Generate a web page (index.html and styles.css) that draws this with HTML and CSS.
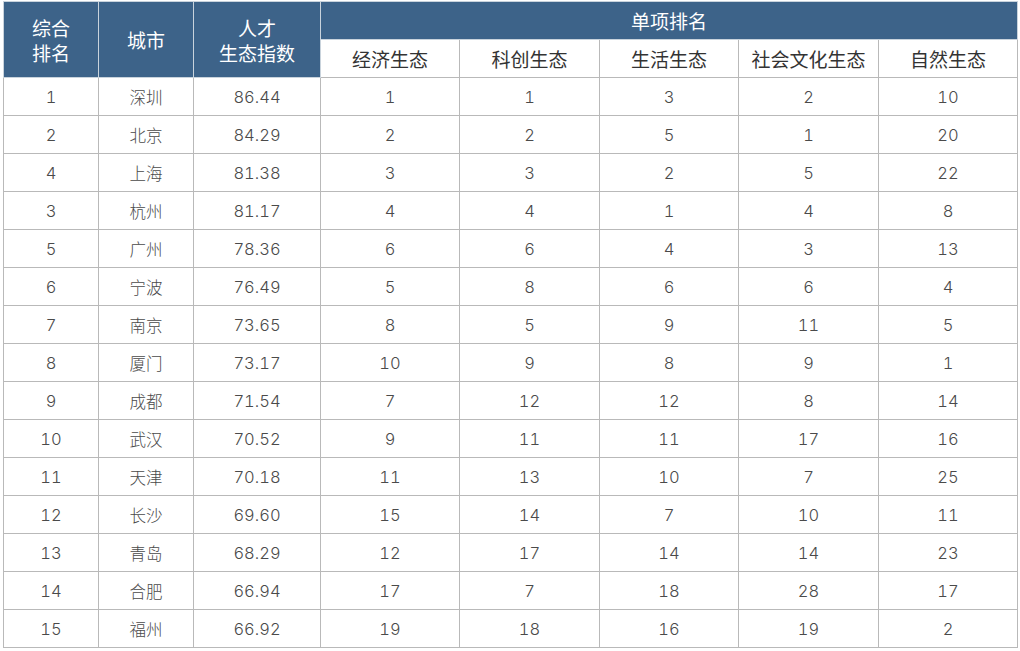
FILE: index.html
```html
<!DOCTYPE html>
<html lang="zh">
<head>
<meta charset="utf-8">
<link rel="stylesheet" href="styles.css">
</head>
<body>
<table class="rank">
<colgroup>
<col class="c1"><col class="c2"><col class="c3"><col class="c4"><col class="c5"><col class="c6"><col class="c7"><col class="c8">
</colgroup>
<thead>
<tr class="h1">
<th rowspan="2" class="hb">综合<br>排名</th>
<th rowspan="2" class="hb">城市</th>
<th rowspan="2" class="hb">人才<br>生态指数</th>
<th colspan="5" class="hb">单项排名</th>
</tr>
<tr class="h2">
<th>经济生态</th><th>科创生态</th><th>生活生态</th><th>社会文化生态</th><th>自然生态</th>
</tr>
</thead>
<tbody>
<tr><td>1</td><td>深圳</td><td>86.44</td><td>1</td><td>1</td><td>3</td><td>2</td><td>10</td></tr>
<tr><td>2</td><td>北京</td><td>84.29</td><td>2</td><td>2</td><td>5</td><td>1</td><td>20</td></tr>
<tr><td>4</td><td>上海</td><td>81.38</td><td>3</td><td>3</td><td>2</td><td>5</td><td>22</td></tr>
<tr><td>3</td><td>杭州</td><td>81.17</td><td>4</td><td>4</td><td>1</td><td>4</td><td>8</td></tr>
<tr><td>5</td><td>广州</td><td>78.36</td><td>6</td><td>6</td><td>4</td><td>3</td><td>13</td></tr>
<tr><td>6</td><td>宁波</td><td>76.49</td><td>5</td><td>8</td><td>6</td><td>6</td><td>4</td></tr>
<tr><td>7</td><td>南京</td><td>73.65</td><td>8</td><td>5</td><td>9</td><td>11</td><td>5</td></tr>
<tr><td>8</td><td>厦门</td><td>73.17</td><td>10</td><td>9</td><td>8</td><td>9</td><td>1</td></tr>
<tr><td>9</td><td>成都</td><td>71.54</td><td>7</td><td>12</td><td>12</td><td>8</td><td>14</td></tr>
<tr><td>10</td><td>武汉</td><td>70.52</td><td>9</td><td>11</td><td>11</td><td>17</td><td>16</td></tr>
<tr><td>11</td><td>天津</td><td>70.18</td><td>11</td><td>13</td><td>10</td><td>7</td><td>25</td></tr>
<tr><td>12</td><td>长沙</td><td>69.60</td><td>15</td><td>14</td><td>7</td><td>10</td><td>11</td></tr>
<tr><td>13</td><td>青岛</td><td>68.29</td><td>12</td><td>17</td><td>14</td><td>14</td><td>23</td></tr>
<tr><td>14</td><td>合肥</td><td>66.94</td><td>17</td><td>7</td><td>18</td><td>28</td><td>17</td></tr>
<tr><td>15</td><td>福州</td><td>66.92</td><td>19</td><td>18</td><td>16</td><td>19</td><td>2</td></tr>
</tbody>
</table>
</body>
</html>
```
FILE: styles.css
```css
html, body {
  margin: 0;
  padding: 0;
  background: #ffffff;
}
body {
  padding: 1px 0 0 3px;
  font-family: "Inter", "Noto Sans CJK SC", sans-serif;
}
.rank {
  border-collapse: collapse;
  table-layout: fixed;
  width: 1014px;
}
.c1 { width: 95px; }
.c2 { width: 95px; }
.c3 { width: 127px; }
.c4 { width: 139px; }
.c5 { width: 140px; }
.c6 { width: 139px; }
.c7 { width: 140px; }
.c8 { width: 139px; }
.rank th, .rank td {
  border: 1px solid #b9b9b9;
  text-align: center;
  vertical-align: middle;
  padding: 0;
}
.rank th {
  font-family: "Noto Sans CJK SC", sans-serif;
  font-weight: 400;
  font-size: 19px;
  line-height: 25px;
  color: #333333;
}
.rank .hb {
  background: #3d6389;
  color: #ffffff;
  border-color: #c9d3dc;
}
.h1 th, .h2 th { height: 37px; }
.rank td {
  height: 37px;
  font-size: 16.5px;
  font-weight: 300;
  font-variant-numeric: tabular-nums;
  color: #4a4a4a;
}
```
